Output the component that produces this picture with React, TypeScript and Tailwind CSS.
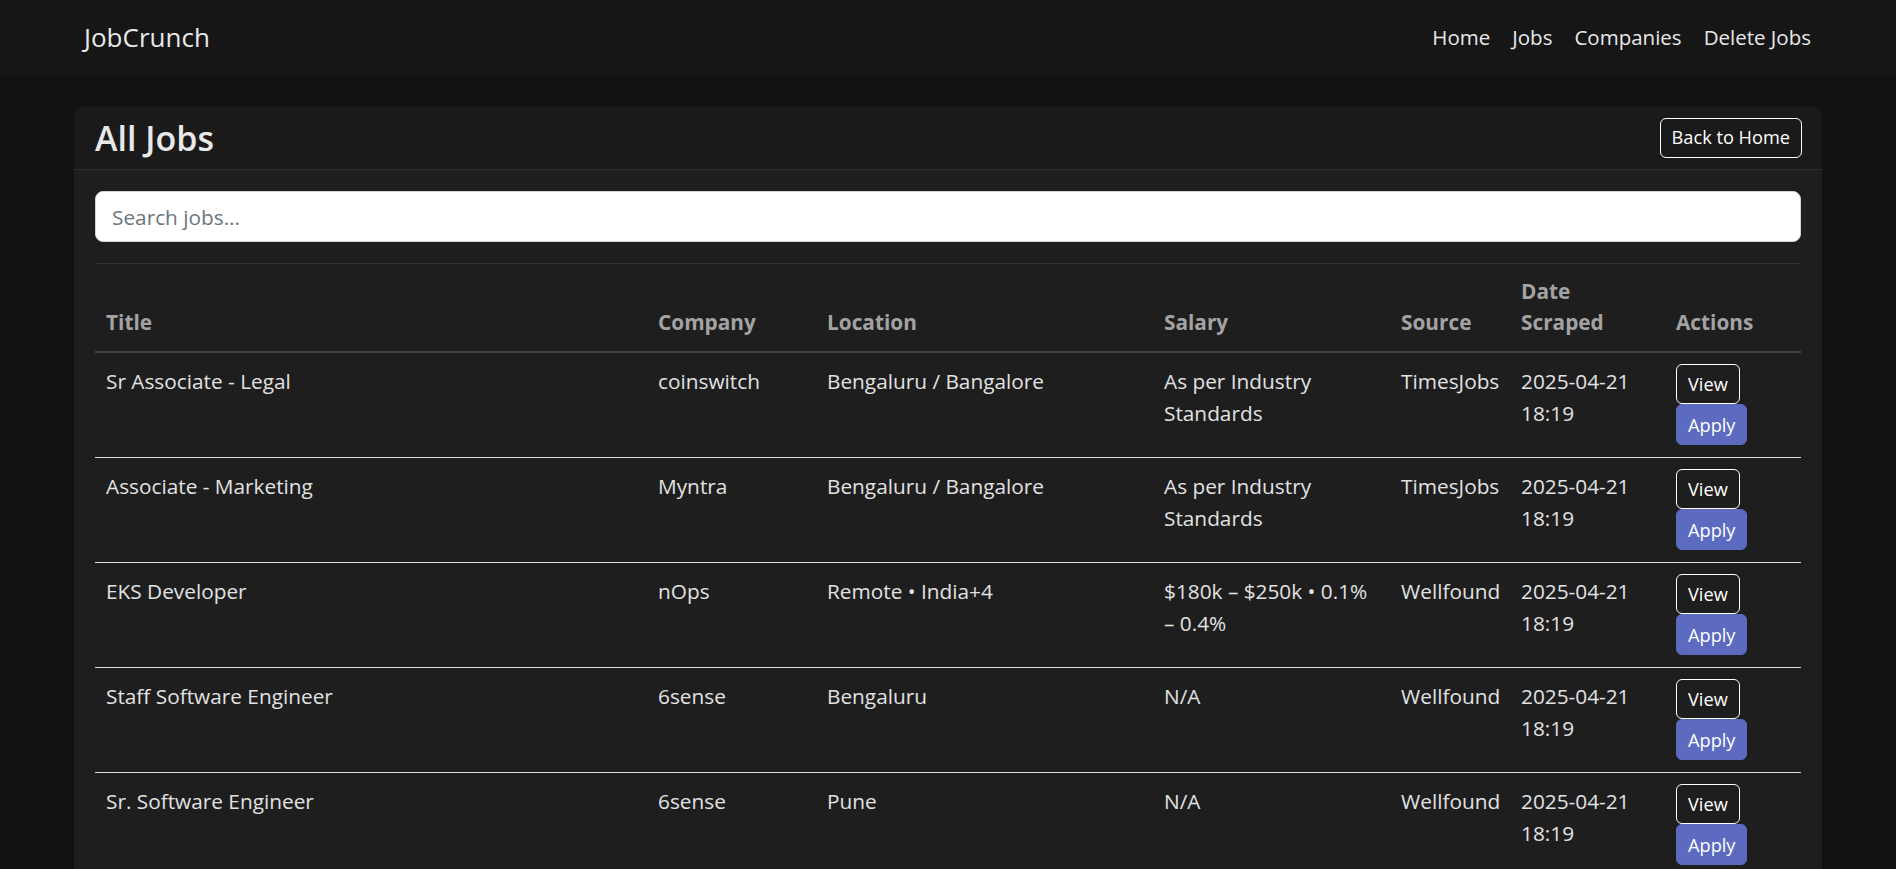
import React from "react";

const jobs = [
  {
    title: "Sr Associate - Legal",
    company: "coinswitch",
    location: "Bengaluru / Bangalore",
    salary: "As per Industry Standards",
    source: "TimesJobs",
    date: "2025-04-21 18:19",
  },
  {
    title: "Associate - Marketing",
    company: "Myntra",
    location: "Bengaluru / Bangalore",
    salary: "As per Industry Standards",
    source: "TimesJobs",
    date: "2025-04-21 18:19",
  },
  {
    title: "EKS Developer",
    company: "nOps",
    location: "Remote • India+4",
    salary: "$180k – $250k • 0.1% – 0.4%",
    source: "Wellfound",
    date: "2025-04-21 18:19",
  },
  {
    title: "Staff Software Engineer",
    company: "6sense",
    location: "Bengaluru",
    salary: "N/A",
    source: "Wellfound",
    date: "2025-04-21 18:19",
  },
  {
    title: "Sr. Software Engineer",
    company: "6sense",
    location: "Pune",
    salary: "N/A",
    source: "Wellfound",
    date: "2025-04-21 18:19",
  },
];

export default function App() {
  return (
    <div className="min-h-screen bg-[#121212] font-['Open_Sans',sans-serif] text-[#e2e2e2]">
      {/* NAVBAR */}
      <nav className="h-[74px] bg-[#161616] flex items-center justify-between px-[74px]">
        <a className="ml-[10px] text-[26px] text-[#e8e8e8]">JobCrunch</a>
        <div className="flex items-center text-[20.5px] text-[#e8e8e8]">
          <a className="px-[11px]">Home</a>
          <a className="px-[11px]">Jobs</a>
          <a className="px-[11px]">Companies</a>
          <a className="px-[11px]">Delete Jobs</a>
        </div>
      </nav>

      {/* CARD */}
      <div className="mx-[74px] mt-[32px] rounded-[10px] overflow-hidden bg-[#1e1e1e]">
        <div className="flex items-center justify-between bg-[#1a1a1a] border-b border-[#2e2e2e] pl-[21px] pr-[20px] h-[64px]">
          <h3 className="text-[34px] font-semibold leading-[1.2] text-[#e8e8e8] mt-[2px]">
            All Jobs
          </h3>
          <button className="h-[40px] px-[11px] border border-white rounded-[6px] text-[18.2px] text-white">
            Back to Home
          </button>
        </div>

        <div className="px-[21px] pt-[21px] pb-5">
          <input
            type="text"
            placeholder="Search jobs..."
            className="w-full h-[51px] bg-white rounded-[8px] border border-[#ced4da] px-4 text-[20.8px] text-[#212529] placeholder:text-[#6c757d] outline-none"
          />
          <hr className="mt-[21px] border-0 border-t border-[#353535]" />

          <table className="w-full table-fixed border-collapse text-[20.8px] leading-[31.2px]">
            <colgroup>
              <col className="w-[552px]" />
              <col className="w-[169px]" />
              <col className="w-[337px]" />
              <col className="w-[237px]" />
              <col className="w-[120px]" />
              <col className="w-[155px]" />
              <col />
            </colgroup>
            <thead>
              <tr className="border-b-2 border-[#444444] text-left text-[#a3a3a3] font-bold">
                <th className="px-[11px] pt-[12px] pb-[13px] align-bottom">Title</th>
                <th className="px-[11px] pt-[12px] pb-[13px] align-bottom">Company</th>
                <th className="px-[11px] pt-[12px] pb-[13px] align-bottom">Location</th>
                <th className="px-[11px] pt-[12px] pb-[13px] align-bottom">Salary</th>
                <th className="px-[11px] pt-[12px] pb-[13px] align-bottom">Source</th>
                <th className="px-[11px] pt-[12px] pb-[13px] align-bottom">
                  Date
                  <br />
                  Scraped
                </th>
                <th className="px-[11px] pt-[12px] pb-[13px] align-bottom">Actions</th>
              </tr>
            </thead>
            <tbody>
              {jobs.map((job, i) => (
                <tr key={i} className="border-b border-[#dedede] align-top">
                  <td className="px-[11px] pt-[13px] pb-[12px]">{job.title}</td>
                  <td className="px-[11px] pt-[13px] pb-[12px]">{job.company}</td>
                  <td className="px-[11px] pt-[13px] pb-[12px]">{job.location}</td>
                  <td className="px-[11px] pt-[13px] pb-[12px]">{job.salary}</td>
                  <td className="px-[11px] pt-[13px] pb-[12px]">{job.source}</td>
                  <td className="px-[11px] pt-[13px] pb-[12px]">{job.date}</td>
                  <td className="px-[11px] pt-[11px] pb-[12px]">
                    <div className="flex flex-col items-start">
                      <button className="h-[40px] px-[11px] border border-white rounded-[6px] text-[18.2px] leading-[26px] text-white">
                        View
                      </button>
                      <button className="h-[41px] px-[11px] bg-[#5c6bc0] border border-[#5c6bc0] rounded-[6px] text-[18.2px] leading-[26px] text-white">
                        Apply
                      </button>
                    </div>
                  </td>
                </tr>
              ))}
            </tbody>
          </table>
        </div>
      </div>
    </div>
  );
}
